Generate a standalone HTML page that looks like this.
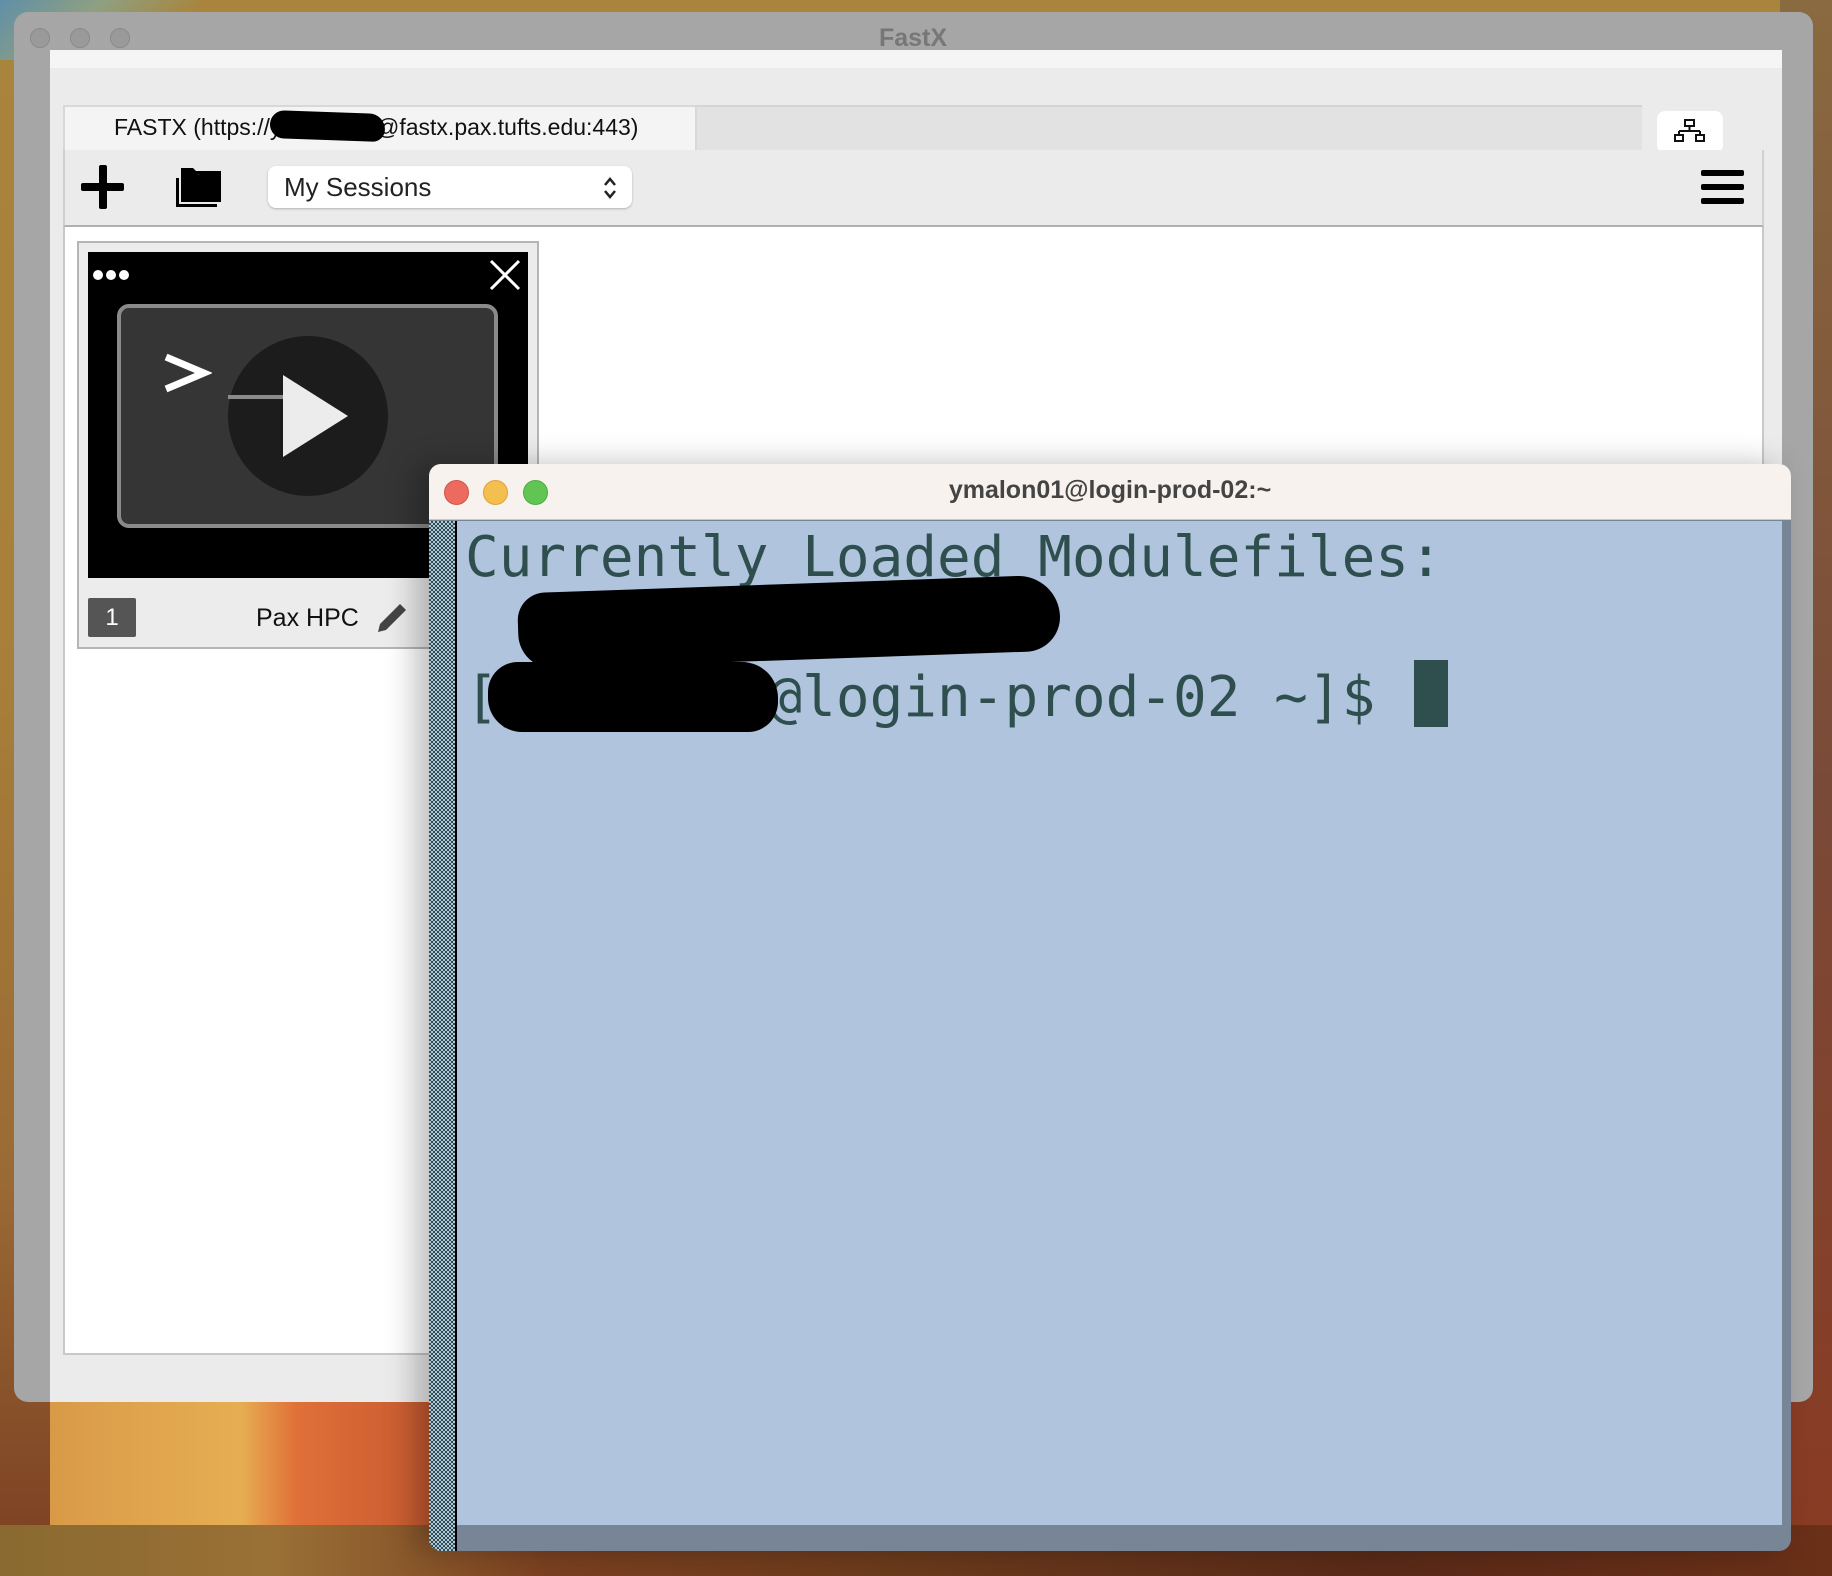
<!DOCTYPE html>
<html><head><meta charset="utf-8"><style>
*{margin:0;padding:0;box-sizing:border-box}
body{width:1832px;height:1576px;overflow:hidden;position:relative;font-family:"Liberation Sans",sans-serif;
background:linear-gradient(180deg,#a9843c 0%,#a8803a 40%,#9a6a34 75%,#7a3e22 100%);}
.abs{position:absolute}
</style></head><body>
<div class="abs" style="left:0;top:0;width:200px;height:60px;background:linear-gradient(135deg,#5f8fa8 0%,#8fa080 40%,rgba(0,0,0,0) 80%)"></div>
<div class="abs" style="left:1780px;top:0;width:52px;height:1576px;background:linear-gradient(180deg,#8a6a40,#7a4a38 50%,#8a3a22)"></div>
<div class="abs" style="left:50px;top:1402px;width:380px;height:123px;background:linear-gradient(90deg,#d99a48 0%,#e6ae52 50%,#e07038 65%,#c65a30 100%)"></div>
<div class="abs" style="left:0;top:1525px;width:1832px;height:51px;background:linear-gradient(90deg,#8a6a30 0%,#9a7036 15%,#7a4020 30%,#6a3a1c 50%,#5a2a18 75%,#6a3018 100%)"></div>

<div class="abs" style="left:14px;top:12px;width:1799px;height:1390px;background:#a6a6a6;border-radius:14px;"></div>
<div class="abs" style="left:30px;top:28px;width:20px;height:20px;border-radius:50%;background:#9a9a9a;border:1px solid #8a8a8a"></div>
<div class="abs" style="left:70px;top:28px;width:20px;height:20px;border-radius:50%;background:#9a9a9a;border:1px solid #8a8a8a"></div>
<div class="abs" style="left:110px;top:28px;width:20px;height:20px;border-radius:50%;background:#9a9a9a;border:1px solid #8a8a8a"></div>
<div class="abs" style="left:0;top:24px;width:1826px;text-align:center;font-weight:bold;font-size:25px;color:#777">FastX</div>
<div class="abs" style="left:50px;top:50px;width:1732px;height:1352px;background:#ebebeb"></div>
<div class="abs" style="left:50px;top:50px;width:1732px;height:18px;background:#f5f5f5"></div>

<div class="abs" style="left:63px;top:105px;width:1579px;height:45px;background:#e2e2e2;border-top:2px solid #d4d4d4"></div>
<div class="abs" style="left:63px;top:105px;width:634px;height:46px;background:#f4f4f4;border:2px solid #d8d8d8;border-bottom:none"></div>
<div class="abs" style="left:114px;top:114px;font-size:23px;color:#111">FASTX (https://y<span>mal</span>&nbsp;&nbsp;&nbsp;&nbsp;&nbsp;&nbsp;&nbsp;&nbsp;&nbsp;@fastx.pax.tufts.edu:443)</div>
<div class="abs" style="left:270px;top:112px;width:115px;height:28px;background:#000;border-radius:14px 16px 12px 14px;transform:rotate(2deg)"></div>
<div class="abs" style="left:1657px;top:111px;width:66px;height:42px;background:#fff;border-radius:8px;"></div>
<svg class="abs" style="left:1674px;top:118px" width="32" height="28" viewBox="0 0 32 28" fill="none" stroke="#111" stroke-width="2"><rect x="11" y="2" width="9" height="6"/><path d="M15.5 8v5M5 13h21M5 13v4M26 13v4"/><rect x="1" y="17" width="8" height="6"/><rect x="22" y="17" width="8" height="6"/></svg>

<div class="abs" style="left:63px;top:150px;width:1701px;height:77px;background:#ebebeb;border-bottom:2px solid #b0b0b0;border-left:2px solid #d0d0d0;border-right:2px solid #d0d0d0"></div>
<div class="abs" style="left:81px;top:183px;width:43px;height:8px;background:#000;border-radius:2px"></div>
<div class="abs" style="left:99px;top:165px;width:8px;height:44px;background:#000;border-radius:2px"></div>
<svg class="abs" style="left:175px;top:166px" width="50" height="42" viewBox="0 0 50 42"><path d="M1 12 h3 v26 h38 v3 H1z" fill="#000"/><path d="M6 6 h14 l3 3 h23 v27 H6z" fill="#000"/><path d="M6 8 v-6 h12 l3 3 h25 v5z" fill="#000"/></svg>
<div class="abs" style="left:268px;top:166px;width:364px;height:42px;background:#fff;border-radius:8px;box-shadow:0 1px 2px rgba(0,0,0,.25)"></div>
<div class="abs" style="left:284px;top:172px;font-size:26px;color:#222">My Sessions</div>
<svg class="abs" style="left:602px;top:175px" width="16" height="26" viewBox="0 0 16 26" fill="none" stroke="#222" stroke-width="2.5"><path d="M3 10l5-6 5 6M3 16l5 6 5-6"/></svg>
<div class="abs" style="left:1701px;top:170px;width:43px;height:6px;background:#000;border-radius:2px"></div>
<div class="abs" style="left:1701px;top:184px;width:43px;height:6px;background:#000;border-radius:2px"></div>
<div class="abs" style="left:1701px;top:198px;width:43px;height:6px;background:#000;border-radius:2px"></div>

<div class="abs" style="left:63px;top:227px;width:1701px;height:1128px;background:#fff;border:2px solid #c8c8c8;border-top:none"></div>

<div class="abs" style="left:77px;top:241px;width:462px;height:408px;background:#ececec;border:2px solid #b5b5b5"></div>
<div class="abs" style="left:88px;top:252px;width:440px;height:326px;background:#000"></div>
<div class="abs" style="left:93px;top:270px;width:10px;height:10px;border-radius:50%;background:#fff"></div>
<div class="abs" style="left:106px;top:270px;width:10px;height:10px;border-radius:50%;background:#fff"></div>
<div class="abs" style="left:119px;top:270px;width:10px;height:10px;border-radius:50%;background:#fff"></div>
<svg class="abs" style="left:488px;top:258px" width="34" height="34" viewBox="0 0 34 34" stroke="#fff" stroke-width="3"><path d="M3 3L31 31M31 3L3 31"/></svg>
<div class="abs" style="left:117px;top:304px;width:381px;height:224px;background:#363536;border:4px solid #8a8a8a;border-radius:12px"></div>
<div class="abs" style="left:228px;top:336px;width:160px;height:160px;border-radius:50%;background:#1c1c1c"></div>
<div class="abs" style="left:228px;top:395px;width:58px;height:4px;background:#8a8a8a"></div>
<svg class="abs" style="left:160px;top:352px" width="52" height="42" viewBox="0 0 52 42" fill="none" stroke="#fff" stroke-width="7"><path d="M6 5L44 21L6 37"/></svg>
<svg class="abs" style="left:280px;top:372px" width="70" height="88" viewBox="0 0 70 88"><path d="M3 3L68 44L3 85z" fill="#ececec"/></svg>
<div class="abs" style="left:88px;top:598px;width:48px;height:39px;background:#555;color:#fff;font-size:24px;text-align:center;line-height:39px;border-radius:2px">1</div>
<div class="abs" style="left:256px;top:604px;font-size:25px;color:#111">Pax HPC</div>
<svg class="abs" style="left:374px;top:600px" width="36" height="36" viewBox="0 0 36 36"><path d="M4 32l2-8L26 4l6 6L12 30z" fill="#444"/></svg>

<div class="abs" style="left:429px;top:464px;width:1362px;height:1087px;border-radius:12px;background:#778596;box-shadow:-14px 0 30px rgba(0,0,0,.25);overflow:hidden">
  <div class="abs" style="left:0;top:0;width:1362px;height:56px;background:#f7f2ee;border-bottom:1px solid #c8c8c8"></div>
  <div class="abs" style="left:15px;top:16px;width:25px;height:25px;border-radius:50%;background:#ec6a5e;border:1px solid #d0554a"></div>
  <div class="abs" style="left:54px;top:16px;width:25px;height:25px;border-radius:50%;background:#f4bf4f;border:1px solid #d9a33b"></div>
  <div class="abs" style="left:94px;top:16px;width:25px;height:25px;border-radius:50%;background:#61c554;border:1px solid #4ea942"></div>
  <div class="abs" style="left:0;top:12px;width:1362px;text-align:center;font-weight:bold;font-size:25px;color:#444">ymalon01@login-prod-02:~</div>
  <div class="abs" style="left:0;top:57px;width:26px;height:1030px;background-color:#b0c4de;background-image:repeating-conic-gradient(#2f4f4f 0 25%,#b0c4de 0 50%);background-size:4px 4px"></div>
  <div class="abs" style="left:26px;top:57px;width:2px;height:1030px;background:#000"></div>
  <div class="abs" style="left:28px;top:57px;width:1325px;height:1004px;background:#b0c4de"></div>
  <div class="abs" style="left:36px;top:59px;font-family:'DejaVu Sans Mono','Liberation Mono',monospace;font-size:56px;line-height:70px;color:#2f4f4f;white-space:pre">Currently Loaded Modulefiles:
 
[ymalon01@login-prod-02 ~]$ </div>
  <div class="abs" style="left:985px;top:196px;width:34px;height:67px;background:#2f4f4f"></div>
  <div class="abs" style="left:89px;top:120px;width:542px;height:76px;background:#000;border-radius:40px 60px 50px 50px;transform:rotate(-2deg)"></div>
  <div class="abs" style="left:59px;top:198px;width:290px;height:70px;background:#000;border-radius:30px 36px 30px 34px"></div>
</div>
</body></html>
